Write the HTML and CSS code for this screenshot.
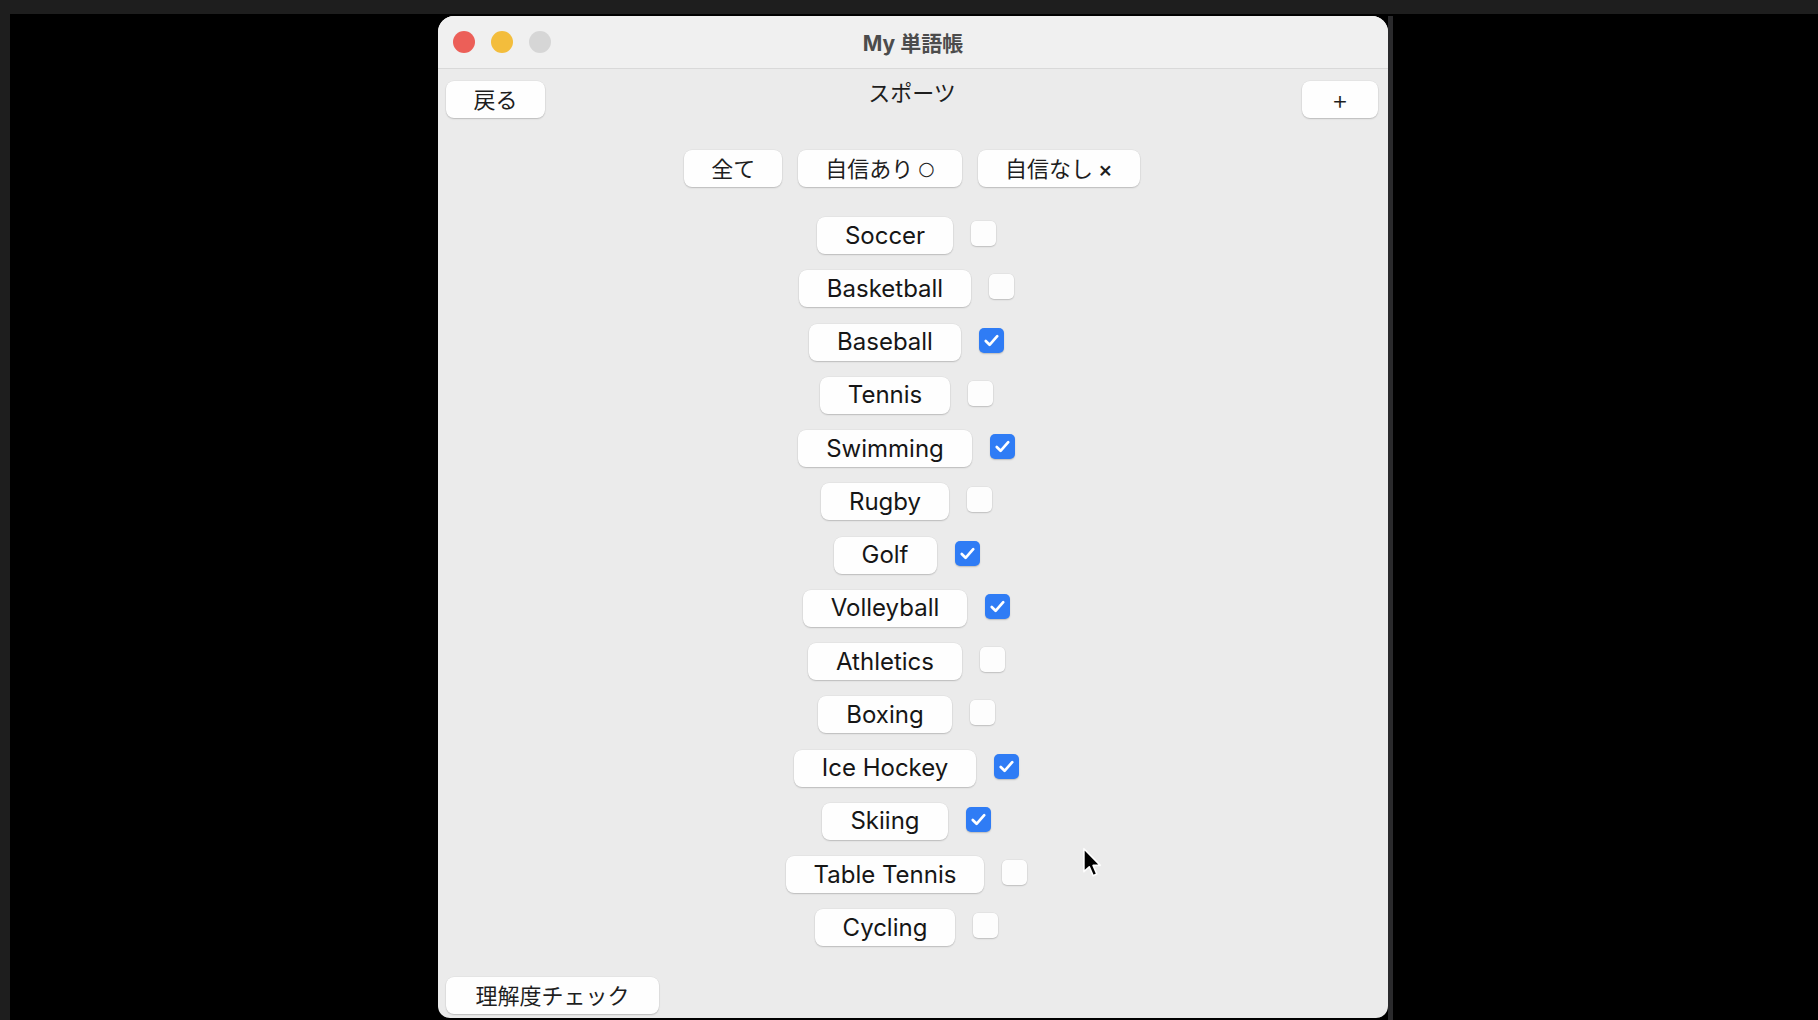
FILE: index.html
```html
<!DOCTYPE html>
<html lang="ja">
<head>
<meta charset="utf-8">
<title>My 単語帳</title>
<link rel="stylesheet" href="styles.css">
</head>
<body>
<div class="screen">
  <div class="topbar"></div>
  <div class="stage">
    <div class="leftstrip"></div>
    <div class="desk">
      <div class="window">
        <div class="titlebar">
          <div class="lights">
            <span class="light red"></span>
            <span class="light yellow"></span>
            <span class="light gray"></span>
          </div>
          <div class="wtitle">My 単語帳</div>
        </div>
        <div class="content">
          <div class="toolbar">
            <div class="tb-left"><button class="btn back">戻る</button></div>
            <div class="heading">スポーツ</div>
            <div class="tb-right"><button class="btn plus">+</button></div>
          </div>
          <div class="filters">
            <button class="btn">全て</button>
            <button class="btn">自信あり<span class="mark">○</span></button>
            <button class="btn">自信なし<span class="mark x">×</span></button>
          </div>
          <div class="list">
            <div class="row"><button class="btn word">Soccer</button><span class="cb"></span></div>
            <div class="row"><button class="btn word">Basketball</button><span class="cb"></span></div>
            <div class="row"><button class="btn word">Baseball</button><span class="cb on"><svg viewBox="0 0 24 24"><path d="M6 12.5l4 4 8-9"/></svg></span></div>
            <div class="row"><button class="btn word">Tennis</button><span class="cb"></span></div>
            <div class="row"><button class="btn word">Swimming</button><span class="cb on"><svg viewBox="0 0 24 24"><path d="M6 12.5l4 4 8-9"/></svg></span></div>
            <div class="row"><button class="btn word">Rugby</button><span class="cb"></span></div>
            <div class="row"><button class="btn word">Golf</button><span class="cb on"><svg viewBox="0 0 24 24"><path d="M6 12.5l4 4 8-9"/></svg></span></div>
            <div class="row"><button class="btn word">Volleyball</button><span class="cb on"><svg viewBox="0 0 24 24"><path d="M6 12.5l4 4 8-9"/></svg></span></div>
            <div class="row"><button class="btn word">Athletics</button><span class="cb"></span></div>
            <div class="row"><button class="btn word">Boxing</button><span class="cb"></span></div>
            <div class="row"><button class="btn word">Ice Hockey</button><span class="cb on"><svg viewBox="0 0 24 24"><path d="M6 12.5l4 4 8-9"/></svg></span></div>
            <div class="row"><button class="btn word">Skiing</button><span class="cb on"><svg viewBox="0 0 24 24"><path d="M6 12.5l4 4 8-9"/></svg></span></div>
            <div class="row"><button class="btn word">Table Tennis</button><span class="cb"></span></div>
            <div class="row"><button class="btn word">Cycling</button><span class="cb"></span></div>
          </div>
          <div class="footer">
            <button class="btn check">理解度チェック</button>
          </div>
        </div>
      </div>
      <div class="rightstrip"></div>
    </div>
  </div>
  <svg class="cursor" viewBox="0 0 18 27" width="21" height="31"><path d="M1.5 1.5 L1.5 21.5 L6.2 17.2 L9.6 25 L12.8 23.6 L9.5 16 L15.8 16 Z" fill="#000" stroke="#fff" stroke-width="1.4" stroke-linejoin="round"/></svg>
</div>
</body>
</html>
```

FILE: styles.css
```css
* { box-sizing: border-box; }
html, body { margin: 0; padding: 0; }
body {
  width: 1818px;
  height: 1020px;
  overflow: hidden;
  background: #000;
  font-family: "Inter", "Noto Sans CJK JP", sans-serif;
}
.screen {
  position: relative;
  width: 1818px;
  height: 1020px;
  display: flex;
  flex-direction: column;
}
.topbar {
  height: 14px;
  background: #1e1e1e;
  flex: none;
}
.stage {
  flex: 1;
  display: flex;
}
.leftstrip {
  width: 10px;
  background: #1e1e1e;
}
.desk {
  flex: 1;
  display: flex;
  align-items: flex-start;
  padding-left: 428px;
  padding-top: 2px;
}
.window {
  width: 950px;
  height: 1002px;
  background: #ebebeb;
  border-radius: 16px 16px 12px 12px;
  overflow: hidden;
  display: flex;
  flex-direction: column;
}
.rightstrip {
  width: 5px;
  height: 1004px;
  background: #2a2a2c;
}
.titlebar {
  height: 53px;
  flex: none;
  background: #f0f0f0;
  border-bottom: 1px solid #d9d9d9;
  display: flex;
  align-items: center;
  position: relative;
  padding-left: 15px;
}
.lights {
  display: flex;
  gap: 16px;
}
.light {
  width: 22px;
  height: 22px;
  border-radius: 50%;
  display: block;
}
.light.red { background: #ec5f58; }
.light.yellow { background: #f3bd3c; }
.light.gray { background: #d6d6d6; }
.wtitle {
  position: absolute;
  left: 0;
  right: 0;
  top: 0;
  bottom: 0;
  display: flex;
  align-items: center;
  justify-content: center;
  font-size: 21px;
  font-weight: 700;
  color: #4c4c4c;
  pointer-events: none;
}
.content {
  flex: 1;
  display: flex;
  flex-direction: column;
  padding: 12px 10px 4px 8px;
}
.btn {
  font-family: "Inter", "Noto Sans CJK JP", sans-serif;
  font-size: 22px;
  color: #1e1e1e;
  background: #fefefe;
  border: none;
  border-radius: 8px;
  height: 37px;
  padding: 0 27px;
  box-shadow: 0 1px 1.5px rgba(0,0,0,0.18), 0 0 0 0.5px rgba(0,0,0,0.05);
  display: inline-flex;
  align-items: center;
  justify-content: center;
  line-height: 1;
  white-space: nowrap;
}
.toolbar {
  display: grid;
  grid-template-columns: 1fr auto 1fr;
  align-items: start;
  height: 37px;
}
.tb-left { display: flex; justify-content: flex-start; }
.tb-right { display: flex; justify-content: flex-end; }
.back { width: 99px; padding: 0; }
.plus { width: 76px; padding: 0; font-size: 26px; font-weight: 300; }
.heading {
  font-size: 22px;
  color: #1e1e1e;
  line-height: 24px;
}
.filters {
  display: flex;
  justify-content: center;
  gap: 16px;
  margin-top: 32px;
}
.mark {
  font-family: "DejaVu Sans", sans-serif;
  font-size: 19px;
  margin-left: 5px;
}
.mark.x {
  font-family: "Inter", sans-serif;
  font-size: 22px;
  font-weight: 500;
  margin-left: 5px;
}
.list {
  display: flex;
  flex-direction: column;
  align-items: center;
  gap: 16.25px;
  margin-top: 30px;
  padding-right: 11px;
}
.row {
  display: flex;
  align-items: center;
  gap: 18px;
}
.word {
  font-size: 24px;
  padding: 0 28px;
  color: #161616;
}
.cb {
  width: 25px;
  height: 25px;
  border-radius: 5px;
  background: #fdfdfd;
  box-shadow: 0 1px 1.5px rgba(0,0,0,0.16), 0 0 0 0.5px rgba(0,0,0,0.06);
  margin-bottom: 4px;
  display: flex;
  align-items: center;
  justify-content: center;
}
.cb.on {
  background: #2f7cf5;
  box-shadow: 0 1px 1.5px rgba(0,0,0,0.2);
}
.cb svg {
  width: 23px;
  height: 23px;
  fill: none;
  stroke: #fff;
  stroke-width: 2.8;
  stroke-linecap: round;
  stroke-linejoin: round;
}
.footer {
  margin-top: auto;
  display: flex;
}
.check { width: 213px; padding: 0; }
.cursor {
  position: absolute;
  left: 1082px;
  top: 847px;
}
```
